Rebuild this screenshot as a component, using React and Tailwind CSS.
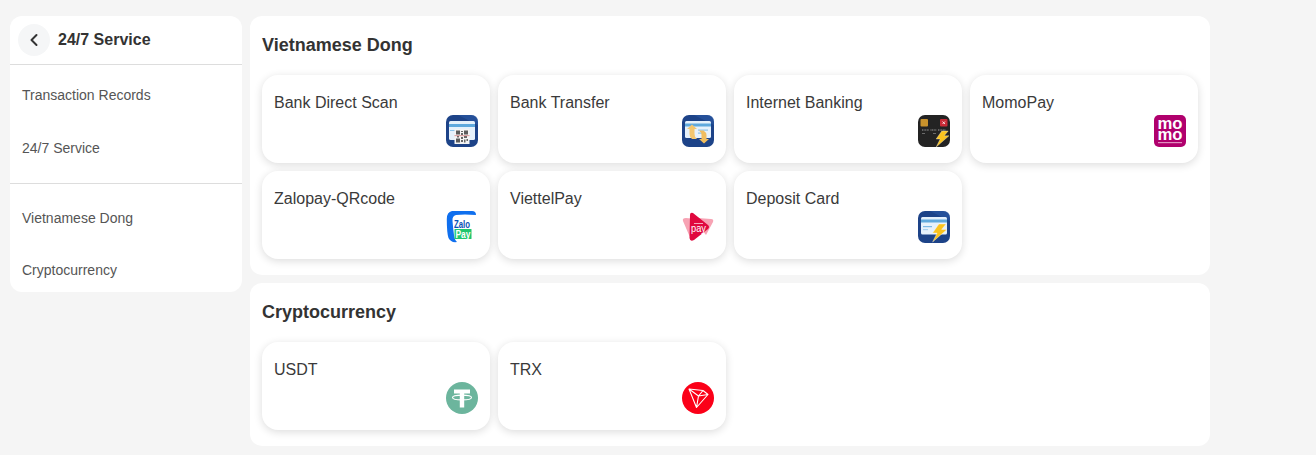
import React from "react";

const Base = ({ children }) => (
  <svg width="32" height="32" viewBox="0 0 32 32">
    <rect width="32" height="32" rx="7" fill="#1d4388" />
    <path d="M12 0H25Q32 0 32 7V10Z" fill="#2c5aa5" opacity=".6" />
    {children}
  </svg>
);

const Bolt = ({ x = 0, y = 0, s = 1 }) => (
  <path
    transform={`translate(${x} ${y}) scale(${s})`}
    d="M11 0H19L14 6H20L4 20L9 10H4Z"
    fill="#fac31e"
    stroke="#fff"
    strokeWidth=".4"
  />
);

const Scan = () => (
  <Base>
    <rect x="3" y="6" width="26" height="19" rx="1.5" fill="#e6f1fb" />
    <rect x="3" y="9" width="26" height="3" fill="#5fa9dd" />
    <rect x="4" y="15" width="5" height="1" fill="#8cc4ea" />
    <rect x="8.5" y="14" width="15" height="15" fill="#f4f4f4" />
    <path d="M10 15.5h4v4h-4zM18 15.5h4v4h-4zM10 23.5h4v4h-4z" fill="#5b5b5b" />
    <path d="M15 16h2v1h-2zM15 18h2v2h-2zM11 21h2v1.5h-2zM15 22h2v2h-2zM18 21h3v2h-3zM15 25h2v2h-2zM18 24.5h1.5v3H18zM20.5 24h1.5v2h-1.5z" fill="#666" />
    <rect x="8.5" y="20.4" width="15" height=".7" fill="#d0706f" />
  </Base>
);

const Transfer = () => (
  <Base>
    <rect x="3" y="6" width="26" height="17" rx="1.5" fill="#e6f1fb" />
    <rect x="3" y="8.5" width="26" height="3" fill="#5fa9dd" />
    <rect x="16" y="14.5" width="10" height="1.2" fill="#8cc4ea" />
    <rect x="16" y="17.5" width="6" height="1.2" fill="#8cc4ea" />
    <path d="M5 14L10 9.5L15 14H12.5V19Q12.5 22 15 24H10Q7.5 22 7.5 19V14Z" fill="#f3c66f" />
    <path d="M27 24L22 28.5L17 24H19.5V20Q19.5 17.5 17 15.5H21.5Q24.5 17.5 24.5 20V24Z" fill="#f0bd5e" />
  </Base>
);

const Banking = () => (
  <svg width="32" height="32" viewBox="0 0 32 32">
    <rect width="32" height="32" rx="7" fill="#232323" />
    <rect x="2.5" y="4" width="7.5" height="7.5" rx="1" fill="#c8922c" />
    <rect x="22" y="4" width="7.5" height="7.5" rx="1" fill="#c92a36" />
    <path d="M24.5 6.5l2.5 2.5M27 6.5l-2.5 2.5" stroke="#fff" strokeWidth=".8" />
    <path d="M4 15h7M12.5 15h6M20 15h8" stroke="#a0a0a0" strokeWidth="1" strokeDasharray="1 .6" />
    <path d="M4 18.5h3M15 18.5h3" stroke="#6a6a6a" strokeWidth="1" />
    <Bolt x={15} y={16} s={0.8} />
  </svg>
);

const Momo = () => (
  <svg width="32" height="32" viewBox="0 0 32 32">
    <rect width="32" height="32" rx="5" fill="#b0006d" />
    <text x="16" y="13.5" textAnchor="middle" fill="#fff" fontFamily="Liberation Sans" fontWeight="700" fontSize="16" textLength="25" lengthAdjust="spacingAndGlyphs">mo</text>
    <text x="16" y="25" textAnchor="middle" fill="#fff" fontFamily="Liberation Sans" fontWeight="700" fontSize="16" textLength="25" lengthAdjust="spacingAndGlyphs">mo</text>
    <rect x="4" y="27" width="24" height="1.2" fill="#e9a9cf" opacity=".85" />
  </svg>
);

const Zalo = () => (
  <svg width="32" height="32" viewBox="0 0 32 32">
    <rect width="32" height="32" rx="7" fill="#fff" />
    <path d="M6 0H26Q30 0 30 4Q18 3 10 4Q6 5 6.5 10Q7 17 8 24Q8.5 29 11 31Q5 32 2.5 27Q.8 22 .8 8Q.8 1 6 0Z" fill="#0f6fee" />
    <text x="16" y="16.8" textAnchor="middle" fill="#0a4fb5" fontFamily="Liberation Sans" fontWeight="700" fontSize="11" textLength="16" lengthAdjust="spacingAndGlyphs">Zalo</text>
    <rect x="8.5" y="18" width="17" height="10" rx=".5" fill="#1fc66d" />
    <text x="17" y="26.5" textAnchor="middle" fill="#fff" fontFamily="Liberation Sans" fontWeight="700" fontSize="10.5" textLength="15" lengthAdjust="spacingAndGlyphs">Pay</text>
  </svg>
);

const Viettel = () => (
  <svg width="32" height="32" viewBox="0 0 32 32">
    <path d="M1 10Q0 7 4 7L14 8L12 27Q8 27 7 24Z" fill="#f7a3b4" />
    <path d="M16 7L29 8Q32 8 31 11L24 24L16 14Z" fill="#f7a3b4" />
    <path d="M8 4Q8 1 11 2L26 14Q28 16 26 18L12 29Q8 31 7.5 27Z" fill="#e0093f" />
    <text x="16.5" y="20.5" textAnchor="middle" fill="#fff" fontFamily="Liberation Sans" fontSize="11" textLength="15" lengthAdjust="spacingAndGlyphs">pay</text>
    <rect x="12" y="12" width="9" height="1" fill="#fff" opacity=".65" />
  </svg>
);

const Deposit = () => (
  <Base>
    <rect x="3" y="6" width="26" height="17.5" rx="1.5" fill="#e6f1fb" />
    <rect x="3" y="8.5" width="26" height="3" fill="#5fa9dd" />
    <rect x="5" y="15" width="9" height="1.2" fill="#7bb9e6" />
    <rect x="5" y="18" width="5" height="1.2" fill="#a8d1ef" />
    <Bolt x={11} y={13} s={0.9} />
  </Base>
);

const Usdt = () => (
  <svg width="32" height="32" viewBox="0 0 32 32">
    <circle cx="16" cy="16" r="16" fill="#6cb59d" />
    <path d="M8 7.5H24V11.5H18.2V25.5H13.8V11.5H8Z" fill="#fff" />
    <ellipse cx="16" cy="15.5" rx="9.5" ry="2.4" fill="none" stroke="#fff" strokeWidth="1.1" />
  </svg>
);

const Trx = () => (
  <svg width="32" height="32" viewBox="0 0 32 32">
    <circle cx="16" cy="16" r="16" fill="#fb0018" />
    <path d="M7 7L14.5 25.5L26 12.5L21 8.5Z M7 7L16.5 14L14.5 25.5 M16.5 14L26 12.5 M16.5 14L21 8.5" fill="none" stroke="#fff" strokeWidth="1.1" strokeLinejoin="round" />
  </svg>
);

const Tile = ({ label, icon }) => (
  <div className="h-[88px] rounded-2xl bg-white shadow-[0_2px_8px_rgba(0,0,0,0.14)] px-3 pt-[17px] flex flex-col">
    <div className="text-base leading-5 text-[#3a3a3a] translate-y-px">{label}</div>
    <div className="mt-[3px] flex justify-end">{icon}</div>
  </div>
);

const Section = ({ title, children }) => (
  <section className="rounded-xl bg-white px-3 pt-[17px] pb-4">
    <h2 className="text-lg leading-[25px] font-bold text-[#333333]">{title}</h2>
    <div className="mt-[17px] grid grid-cols-4 gap-2">{children}</div>
  </section>
);

const NavItem = ({ children, cls }) => (
  <div className={`pl-3 text-sm leading-5 text-[#555555] ${cls}`}>{children}</div>
);

export default function App() {
  return (
    <div className="min-h-[455px] bg-[#f5f5f5] pl-[10px] pt-4 font-['Liberation_Sans',Arial,sans-serif] flex items-start gap-2">
      <aside className="w-[232px] h-[276px] rounded-xl bg-white">
        <div className="h-[49px] border-b border-[#dddddd] flex items-center pl-2 gap-2">
          <div className="w-8 h-8 rounded-full bg-[#f5f6f7] flex items-center justify-center">
            <svg width="16" height="16" viewBox="0 0 16 16" fill="none" stroke="#333333" strokeWidth="2" strokeLinecap="round" strokeLinejoin="round">
              <path d="M10.5 3L5.5 8L10.5 13" />
            </svg>
          </div>
          <div className="text-base font-bold text-[#333333]">24/7 Service</div>
        </div>
        <NavItem cls="mt-5">Transaction Records</NavItem>
        <NavItem cls="mt-[33px]">24/7 Service</NavItem>
        <div className="mt-[25px] border-t border-[#dddddd]" />
        <NavItem cls="mt-6">Vietnamese Dong</NavItem>
        <NavItem cls="mt-8">Cryptocurrency</NavItem>
      </aside>
      <main className="w-[960px] flex flex-col gap-2">
        <Section title="Vietnamese Dong">
          <Tile label="Bank Direct Scan" icon={<Scan />} />
          <Tile label="Bank Transfer" icon={<Transfer />} />
          <Tile label="Internet Banking" icon={<Banking />} />
          <Tile label="MomoPay" icon={<Momo />} />
          <Tile label="Zalopay-QRcode" icon={<Zalo />} />
          <Tile label="ViettelPay" icon={<Viettel />} />
          <Tile label="Deposit Card" icon={<Deposit />} />
        </Section>
        <Section title="Cryptocurrency">
          <Tile label="USDT" icon={<Usdt />} />
          <Tile label="TRX" icon={<Trx />} />
        </Section>
      </main>
    </div>
  );
}
